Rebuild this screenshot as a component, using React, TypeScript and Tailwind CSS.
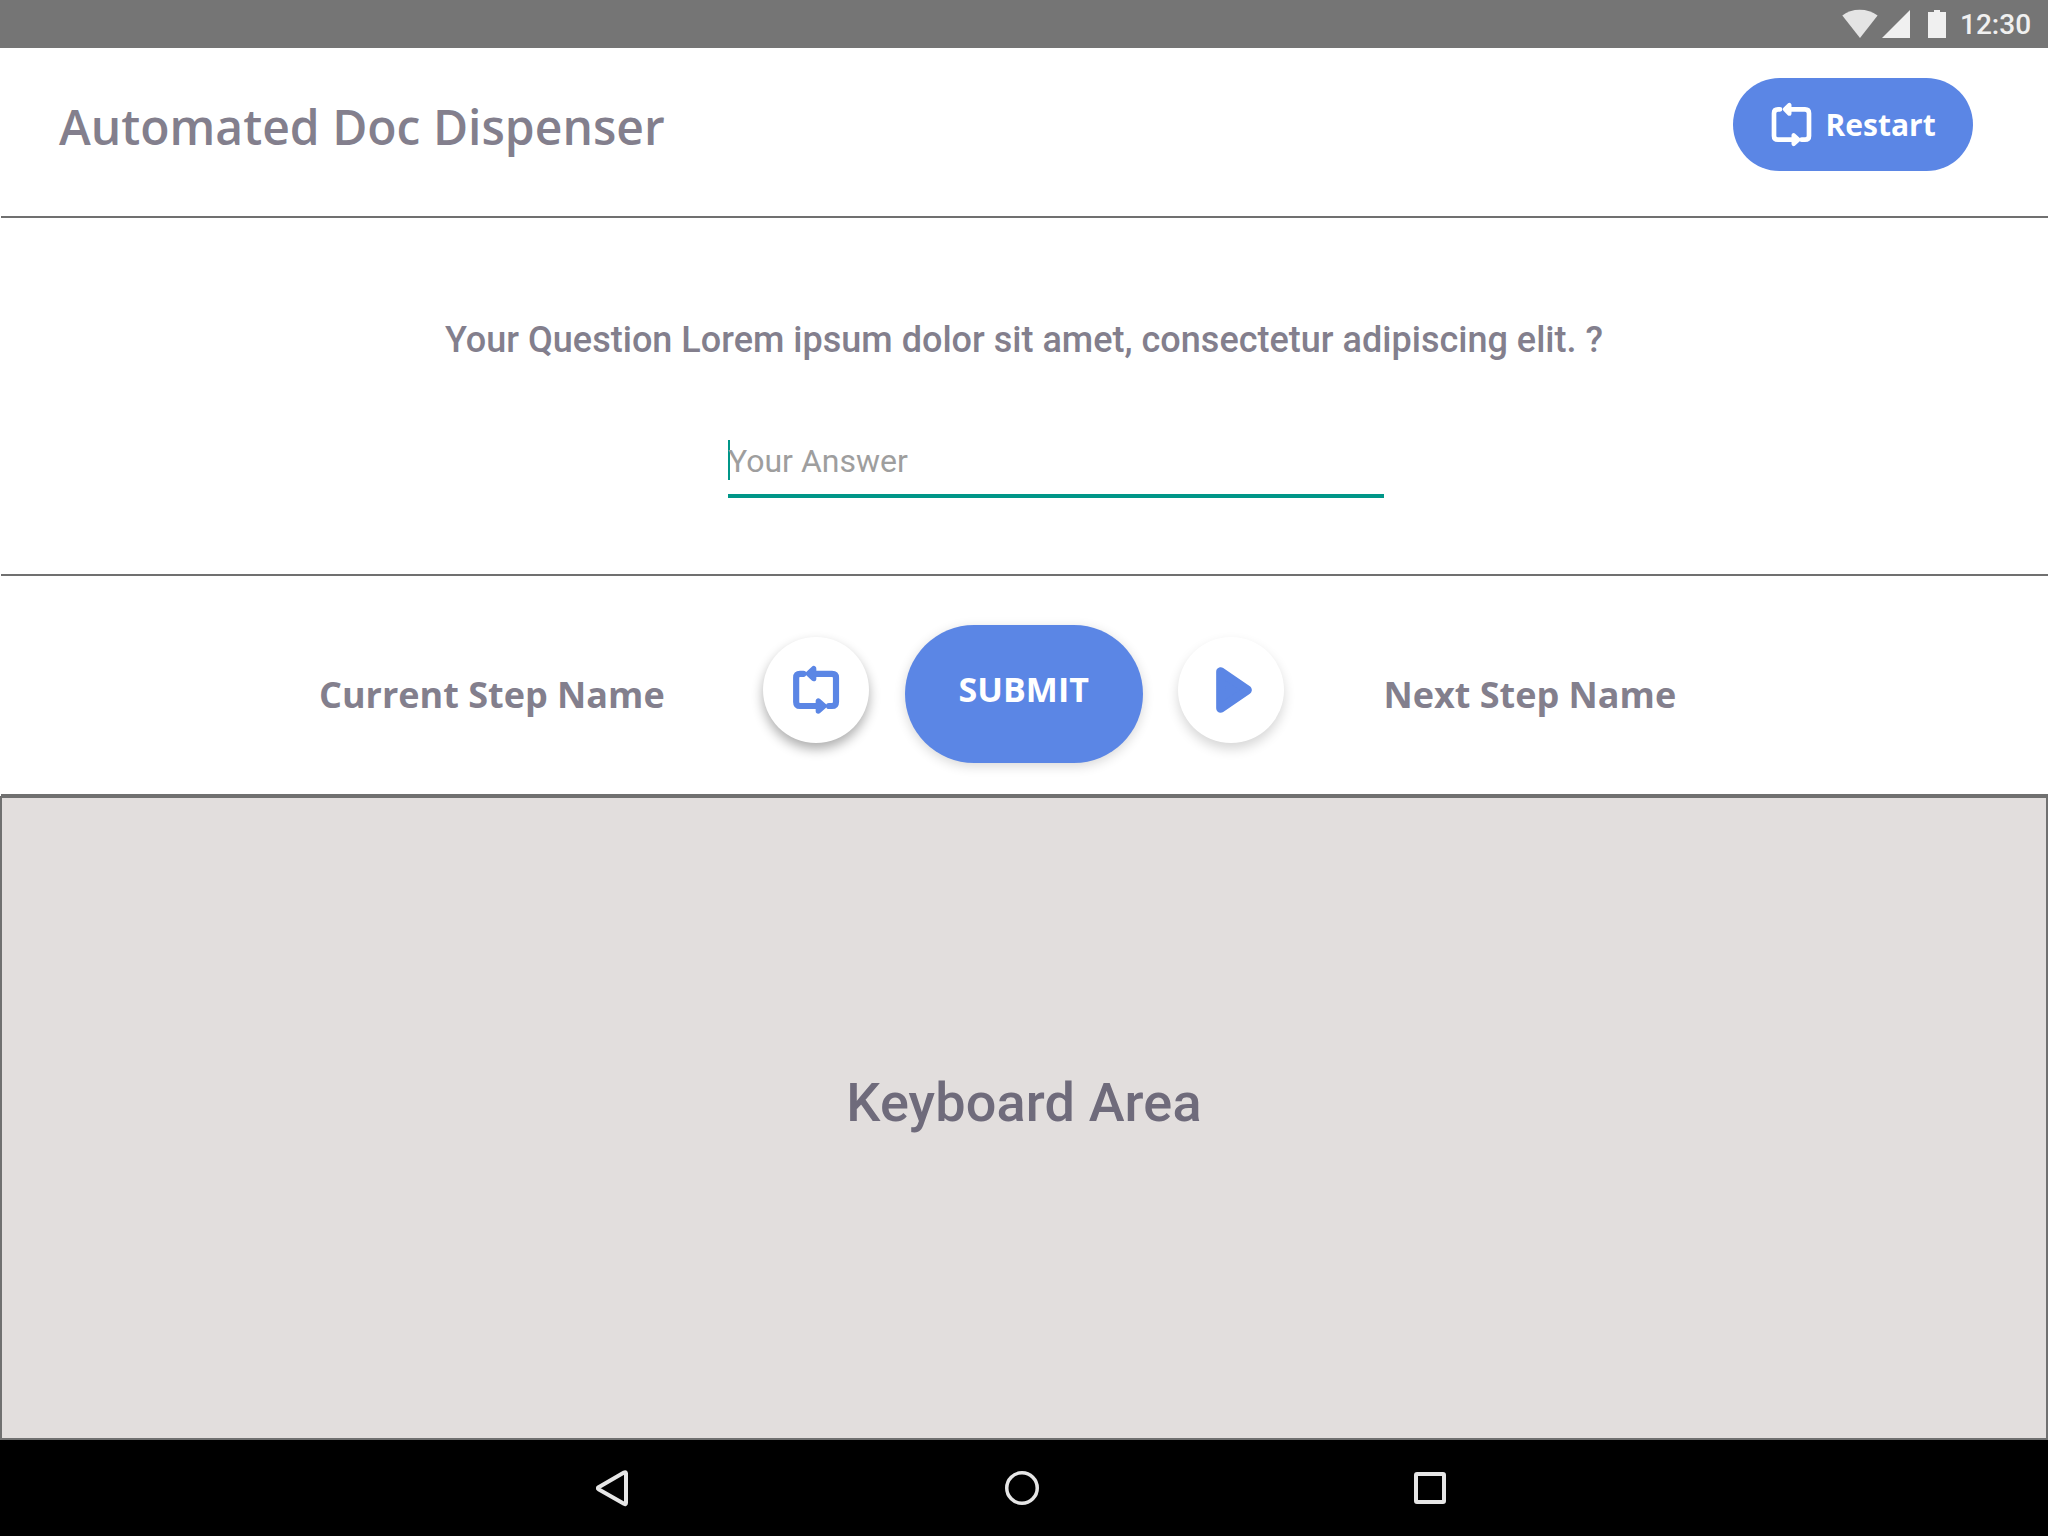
function StatusBar() {
  return (
    <div className="flex h-12 shrink-0 items-start bg-[#757575] pl-[1842px]">
      <svg className="mt-[9px] h-[30px] w-[106px] shrink-0" viewBox="0 0 106 30">
        <path d="M0.3 6.6C5 2.6 11 0.7 17.7 0.7S30.500 2.600 35.600 6.600L18 29Z" fill="#e4e4e4" />
        <path d="M68 1V29H40Z" fill="#f0f0f0" />
        <path d="M92 1h6v2h6v26H86V3h6Z" fill="#f0f0f0" />
      </svg>
      <span className="ml-[12px] mt-[8px] text-[28px] leading-[33px] font-medium text-[#f0f0f0]">12:30</span>
    </div>
  );
}

function HeaderRepeatIcon() {
  return (
    <svg className="h-[45px] w-[41px] shrink-0" viewBox="152 108 123 135" fill="none" stroke="white" strokeLinecap="round" strokeLinejoin="round">
      <path d="M179 130H173Q161 130 161 142V210Q161 221 173 221H222M244 221H254Q266 221 266 210V142Q266 130 254 130H206" strokeWidth="14" />
      <path d="M194 130L207 117V143ZM234 221L220 208V234Z" fill="white" strokeWidth="13" />
    </svg>
  );
}

function StepRepeatIcon() {
  return (
    <svg className="h-[50px] w-[48px]" viewBox="158 195 144 150" fill="none" stroke="#5b86e5" strokeLinecap="round" strokeLinejoin="round">
      <path d="M192 221.500H182Q170.500 221.500 170.500 233V306Q170.500 318 182 318H236M269 318H278Q290 318 290 306V233Q290 221.500 278 221.500H222" strokeWidth="18.500" />
      <path d="M207 221L223 206V236ZM254 318L237 303V333Z" fill="#5b86e5" strokeWidth="16" />
    </svg>
  );
}

export default function App() {
  return (
    <div className="flex h-[1536px] w-[2048px] flex-col overflow-hidden bg-white font-['Roboto',sans-serif] text-[#837f8d]">
      <StatusBar />

      <header className="ml-px flex h-[170px] shrink-0 items-start justify-between border-b-2 border-[#707070] pl-[58px] pr-[75px]">
        <h1 className="mt-[46px] whitespace-nowrap font-['Open_Sans',sans-serif] text-[48px] leading-[65px] font-semibold">Automated Doc Dispenser</h1>
        <button className="mt-[30px] flex h-[93px] w-[240px] items-center rounded-[46.500px] bg-[#5b86e5] pl-[37.500px] text-white">
          <HeaderRepeatIcon />
          <span className="ml-[14px] font-['Open_Sans',sans-serif] text-[30px] leading-[41px] font-bold">Restart</span>
        </button>
      </header>

      <section className="ml-px flex h-[358px] shrink-0 flex-col border-b-2 border-[#707070]">
        <p className="-ml-px mt-[101px] whitespace-nowrap text-center text-[36px] leading-[43px] font-medium tracking-[0.015px]">
          Your Question Lorem ipsum dolor sit amet, consectetur adipiscing elit. ?
        </p>
        <div className="ml-[727px] mt-[78px] flex h-[58px] w-[656px] items-start border-b-4 border-[#009688]">
          <span className="h-10 w-[2px] bg-[#009688]" />
          <span className="-ml-[2px] mt-[2px] text-[32px] leading-[38px] text-[#9e9e9e]">Your Answer</span>
        </div>
      </section>

      <section className="ml-px flex h-[220px] shrink-0 items-start border-b-2 border-[#707070]">
        <span className="ml-[318px] mt-[94px] w-[444.400px] whitespace-nowrap font-['Open_Sans',sans-serif] text-[36px] leading-[49px] font-bold">Current Step Name</span>
        <button className="mt-[61px] flex size-[106px] shrink-0 items-center justify-center rounded-full bg-white shadow-[0_6px_12px_rgba(0,0,0,0.32)]">
          <StepRepeatIcon />
        </button>
        <button className="ml-[35.600px] mt-[49px] flex h-[138px] w-[238.500px] shrink-0 items-start justify-center rounded-[69px] bg-[#5b86e5] pr-[1px] pt-[41px] font-['Open_Sans',sans-serif] text-[34px] leading-[46px] font-bold text-white shadow-[0_3px_12px_rgba(0,0,0,0.16)]">
          SUBMIT
        </button>
        <button className="ml-[34.500px] mt-[61px] flex size-[106px] shrink-0 items-center justify-center rounded-full bg-white shadow-[0_6px_12px_rgba(0,0,0,0.16)]">
          <svg className="ml-[7px] h-[46px] w-[36px]" viewBox="591 201 108 138">
            <path d="M605 215V325L685 270Z" fill="#5b86e5" stroke="#5b86e5" strokeWidth="27" strokeLinejoin="round" />
          </svg>
        </button>
        <span className="ml-[99.400px] mt-[94px] whitespace-nowrap font-['Open_Sans',sans-serif] text-[36px] leading-[49px] font-bold">Next Step Name</span>
      </section>

      <main className="flex h-[644px] shrink-0 items-start justify-center border-2 border-[#707070] bg-[#e2dedd]">
        <span className="mt-[272px] text-[54px] leading-[66px] font-medium tracking-[0.15px] text-[#6f6b7b]">Keyboard Area</span>
      </main>

      <nav className="flex h-24 shrink-0 items-start bg-black pl-[596px]">
        <svg className="mt-[29px] h-[38px] w-[34px]" viewBox="0 0 34 38" fill="none" stroke="#e6e6e6" strokeWidth="4" strokeLinejoin="round">
          <path d="M2.200 18.500Q1.500 19.500 2.500 20.200L28 34.800Q30 35.800 30 34V4.500Q30 2.600 28 3.500L3 18Z" />
        </svg>
        <svg className="ml-[375px] mt-[31px] size-[34px]" viewBox="0 0 34 34" fill="none" stroke="#e6e6e6" strokeWidth="3.500">
          <circle cx="17" cy="17" r="15.250" />
        </svg>
        <span className="ml-[375px] mt-[32px] size-8 rounded-[3px] border-4 border-[#e6e6e6]" />
      </nav>
    </div>
  );
}
